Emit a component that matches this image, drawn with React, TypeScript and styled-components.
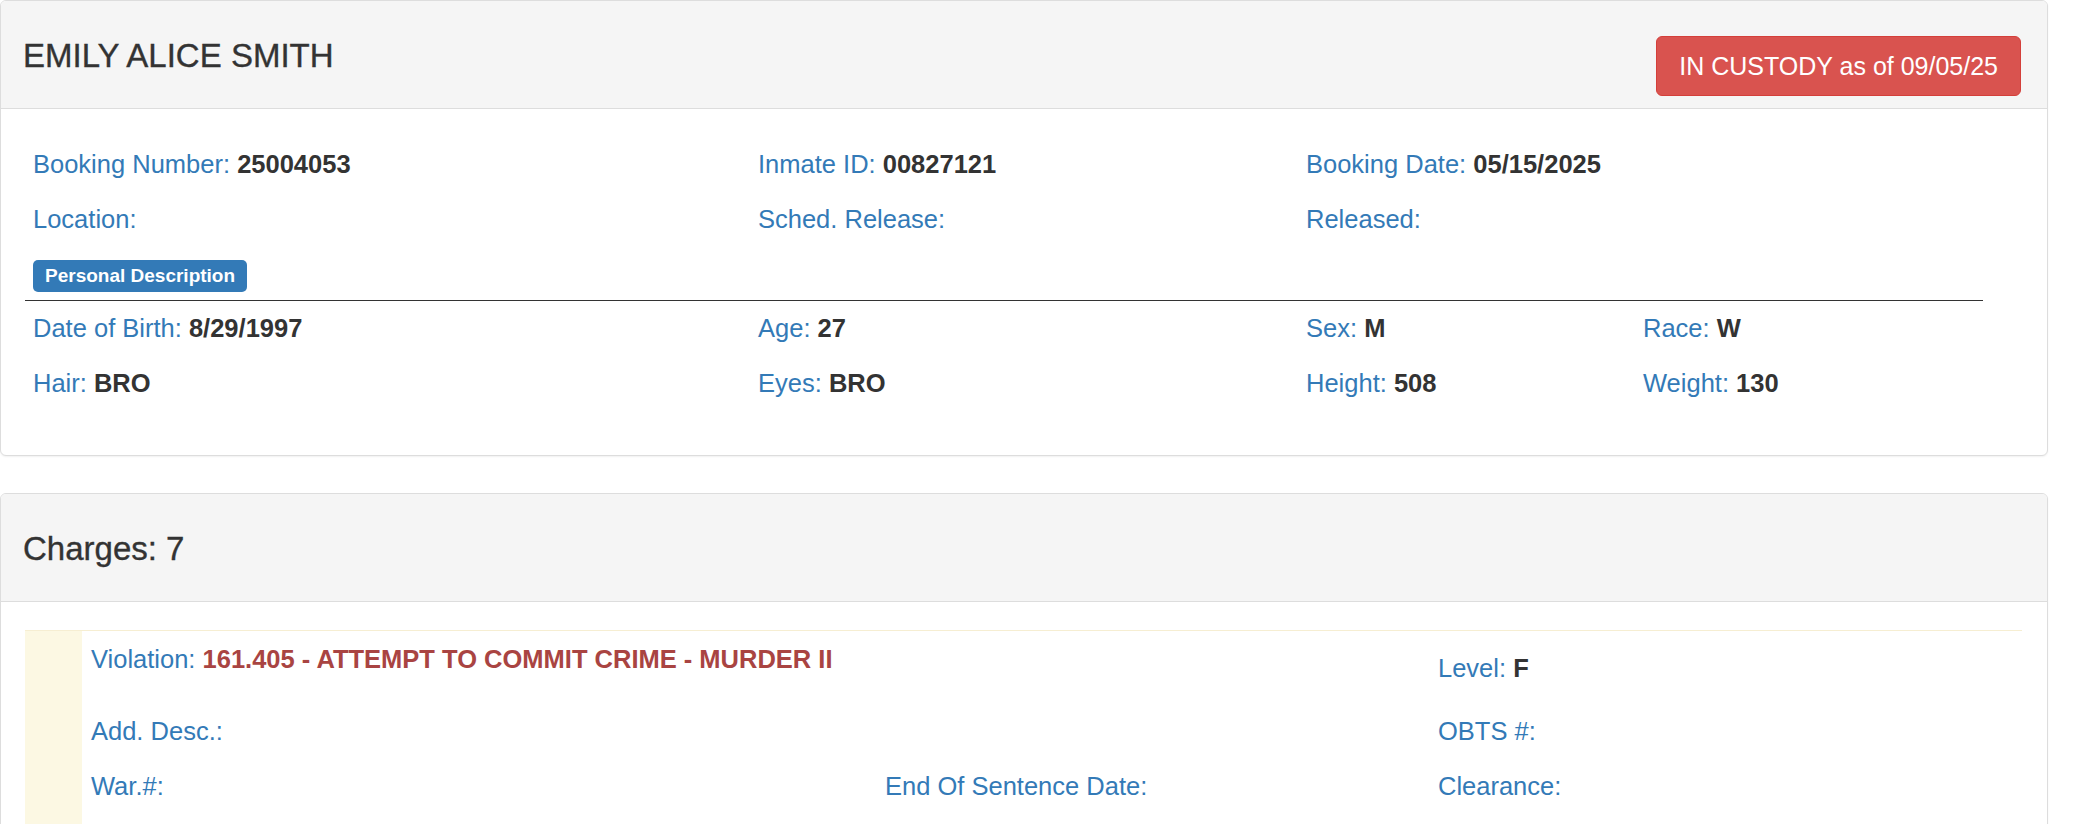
import React from "react";
import styled, { createGlobalStyle } from "styled-components";

const GlobalStyle = createGlobalStyle`
  html, body { margin: 0; padding: 0; background: #fff; }
  body {
    font-family: "Liberation Sans", Arial, Helvetica, sans-serif;
    color: #333;
    -webkit-font-smoothing: antialiased;
  }
  * { box-sizing: border-box; }
`;

const Page = styled.div`
  width: 2076px;
  padding: 0 28px 0 0;
`;

const Panel = styled.section`
  background: #fff;
  border: 1px solid #ddd;
  border-radius: 6px;
  box-shadow: 0 1px 2px rgba(0, 0, 0, 0.06);
  margin-bottom: 37px;
  overflow: hidden;
`;

const PanelHeading = styled.header`
  height: 108px;
  background: #f5f5f5;
  border-bottom: 1px solid #ddd;
  display: flex;
  justify-content: space-between;
  align-items: flex-start;
  padding: 0 26px 0 22px;
`;

const PanelTitle = styled.h3`
  margin: 37px 0 0;
  font-size: 33px;
  line-height: 36px;
  font-weight: 500;
  color: #333;
  -webkit-text-stroke: 0.35px #333;
`;

const StatusButton = styled.button`
  margin-top: 35px;
  font-family: inherit;
  font-size: 25px;
  line-height: 34px;
  padding: 12px 22px;
  color: #fff;
  background: #d9534f;
  border: 1px solid #d43f3a;
  border-radius: 6px;
  white-space: nowrap;
`;

const PanelBody = styled.div<{ $pad: string }>`
  padding: ${(p) => p.$pad};
`;

const FieldGrid = styled.div<{ $cols: string }>`
  display: grid;
  grid-template-columns: ${(p) => p.$cols};
  row-gap: 20px;
  padding-left: 8px;
`;

const Field = styled.div<{ $span?: number; $offset?: number; $extra?: number }>`
  font-size: 25.5px;
  line-height: 35px;
  white-space: nowrap;
  grid-column: ${(p) => (p.$span ? `span ${p.$span}` : "auto")};
  margin-top: ${(p) => p.$offset ?? 0}px;
  padding-bottom: ${(p) => p.$extra ?? 0}px;
`;

const Label = styled.span`
  color: #337ab7;
`;

const Value = styled.b<{ $danger?: boolean }>`
  font-weight: bold;
  color: ${(p) => (p.$danger ? "#a94442" : "#333")};
`;

const Badge = styled.span`
  display: inline-block;
  margin: 23px 0 0 8px;
  padding: 5px 12px;
  font-size: 19px;
  line-height: 22px;
  font-weight: bold;
  color: #fff;
  background: #337ab7;
  border-radius: 5px;
`;

const Divider = styled.hr`
  margin: 8px 40px 10px 0;
  border: 0;
  border-top: 1px solid #333;
`;

const ChargeRow = styled.div`
  display: flex;
  border-top: 1px solid #f6eed2;
`;

const ChargeBar = styled.div`
  width: 57px;
  flex: none;
  background: #fcf8e3;
`;

const ChargeContent = styled.div`
  flex: 1;
  padding: 11px 0 40px 1px;
`;

type F = { label: string; value?: string };

const Item = ({ label, value, danger }: F & { danger?: boolean }) => (
  <>
    <Label>{label}:</Label>
    {value ? <> <Value $danger={danger}>{value}</Value></> : null}
  </>
);

const booking: F[] = [
  { label: "Booking Number", value: "25004053" },
  { label: "Inmate ID", value: "00827121" },
  { label: "Booking Date", value: "05/15/2025" },
  { label: "", value: "" },
  { label: "Location" },
  { label: "Sched. Release" },
  { label: "Released" },
  { label: "", value: "" },
];

const personal: F[] = [
  { label: "Date of Birth", value: "8/29/1997" },
  { label: "Age", value: "27" },
  { label: "Sex", value: "M" },
  { label: "Race", value: "W" },
  { label: "Hair", value: "BRO" },
  { label: "Eyes", value: "BRO" },
  { label: "Height", value: "508" },
  { label: "Weight", value: "130" },
];

const COLS = "725px 548px 337px 1fr";

export default function App() {
  return (
    <Page>
      <GlobalStyle />
      <Panel>
        <PanelHeading>
          <PanelTitle>EMILY ALICE SMITH</PanelTitle>
          <StatusButton type="button">IN CUSTODY as of 09/05/25</StatusButton>
        </PanelHeading>
        <PanelBody $pad="38px 24px 54px 24px">
          <FieldGrid $cols={COLS}>
            {booking.map((f, i) => (
              <Field key={i}>{f.label ? <Item {...f} /> : null}</Field>
            ))}
          </FieldGrid>
          <Badge>Personal Description</Badge>
          <Divider />
          <FieldGrid $cols={COLS}>
            {personal.map((f, i) => (
              <Field key={i}>
                <Item {...f} />
              </Field>
            ))}
          </FieldGrid>
        </PanelBody>
      </Panel>

      <Panel>
        <PanelHeading>
          <PanelTitle>Charges: 7</PanelTitle>
        </PanelHeading>
        <PanelBody $pad="28px 25px 0 24px">
          <ChargeRow>
            <ChargeBar />
            <ChargeContent>
              <FieldGrid $cols="794px 553px 1fr">
                <Field $span={2} $extra={17}>
                  <Item
                    label="Violation"
                    value="161.405 - ATTEMPT TO COMMIT CRIME - MURDER II"
                    danger
                  />
                </Field>
                <Field $offset={9}>
                  <Item label="Level" value="F" />
                </Field>
                <Field $span={2}>
                  <Item label="Add. Desc." />
                </Field>
                <Field>
                  <Item label="OBTS #" />
                </Field>
                <Field>
                  <Item label="War.#" />
                </Field>
                <Field>
                  <Item label="End Of Sentence Date" />
                </Field>
                <Field>
                  <Item label="Clearance" />
                </Field>
              </FieldGrid>
            </ChargeContent>
          </ChargeRow>
        </PanelBody>
      </Panel>
    </Page>
  );
}
